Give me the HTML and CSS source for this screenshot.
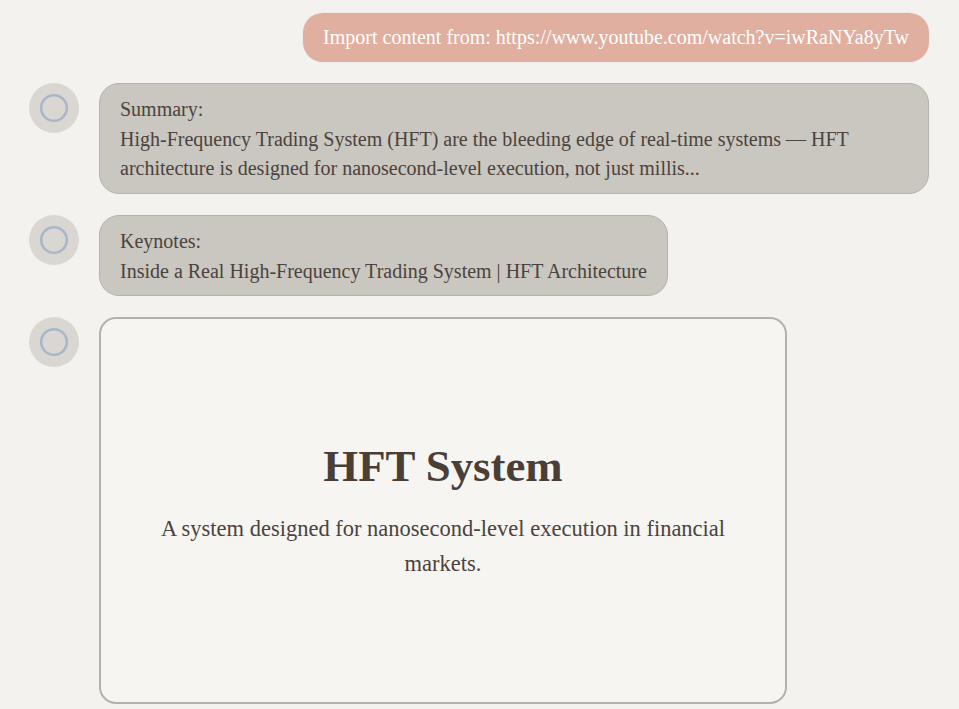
FILE: index.html
```html
<!DOCTYPE html>
<html lang="en">
<head>
<meta charset="utf-8">
<title>Chat</title>
<link rel="stylesheet" href="styles.css">
</head>
<body>
<div class="chat">
  <div class="row row-user">
    <div class="bubble-user">Import content from: https://www.youtube.com/watch?v=iwRaNYa8yTw</div>
  </div>
  <div class="row">
    <div class="avatar"><svg width="30" height="30" viewBox="0 0 30 30"><circle cx="15" cy="15" r="12.8" fill="none" stroke="#a9b6c9" stroke-width="2.6"/></svg></div>
    <div class="bubble">Summary:<br>High-Frequency Trading System (HFT) are the bleeding edge of real-time systems — HFT architecture is designed for nanosecond-level execution, not just millis...</div>
  </div>
  <div class="row">
    <div class="avatar"><svg width="30" height="30" viewBox="0 0 30 30"><circle cx="15" cy="15" r="12.8" fill="none" stroke="#a9b6c9" stroke-width="2.6"/></svg></div>
    <div class="bubble">Keynotes:<br>Inside a Real High-Frequency Trading System | HFT Architecture</div>
  </div>
  <div class="row">
    <div class="avatar"><svg width="30" height="30" viewBox="0 0 30 30"><circle cx="15" cy="15" r="12.8" fill="none" stroke="#a9b6c9" stroke-width="2.6"/></svg></div>
    <div class="card">
      <h1 class="card-title">HFT System</h1>
      <p class="card-text">A system designed for nanosecond-level execution in financial markets.</p>
    </div>
  </div>
</div>
</body>
</html>
```
FILE: styles.css
```css
html, body {
  margin: 0;
  padding: 0;
  background: #f3f2ee;
  font-family: "Liberation Serif", "Times New Roman", serif;
  color: #4b433d;
}
.chat {
  display: flex;
  flex-direction: column;
  gap: 21px;
  padding: 13px 30px 0 29px;
}
.row {
  display: flex;
  align-items: flex-start;
  gap: 20px;
}
.row-user {
  justify-content: flex-end;
}
.bubble-user {
  background: #e0afa0;
  color: #ffffff;
  font-size: 20px;
  line-height: 29.5px;
  padding: 10px 20px 9px;
  border-radius: 20px;
  box-shadow: 0 0 2px rgba(0,0,0,0.08);
}
.avatar {
  flex: 0 0 50px;
  width: 50px;
  height: 50px;
  border-radius: 50%;
  background: #dad7d2;
  display: flex;
  align-items: center;
  justify-content: center;
}
.avatar svg { display: block; }
.bubble {
  background: #cac6c0;
  border: 1px solid #b7b2ac;
  border-radius: 20px;
  padding: 11.5px 20px 9px;
  font-size: 20px;
  line-height: 29.5px;
}
.card {
  box-sizing: border-box;
  width: 688px;
  height: 387px;
  border: 2.5px solid #b6b0ab;
  border-radius: 17px;
  background: #f7f5f1;
  display: flex;
  flex-direction: column;
  align-items: center;
  justify-content: center;
  padding: 0 40px;
  text-align: center;
}
.card-title {
  margin: 0 0 17px;
  font-size: 44.8px;
  font-weight: bold;
  line-height: 1.2;
  color: #4a3f37;
}
.card-text {
  margin: 0;
  font-size: 22.5px;
  line-height: 35px;
}
```
